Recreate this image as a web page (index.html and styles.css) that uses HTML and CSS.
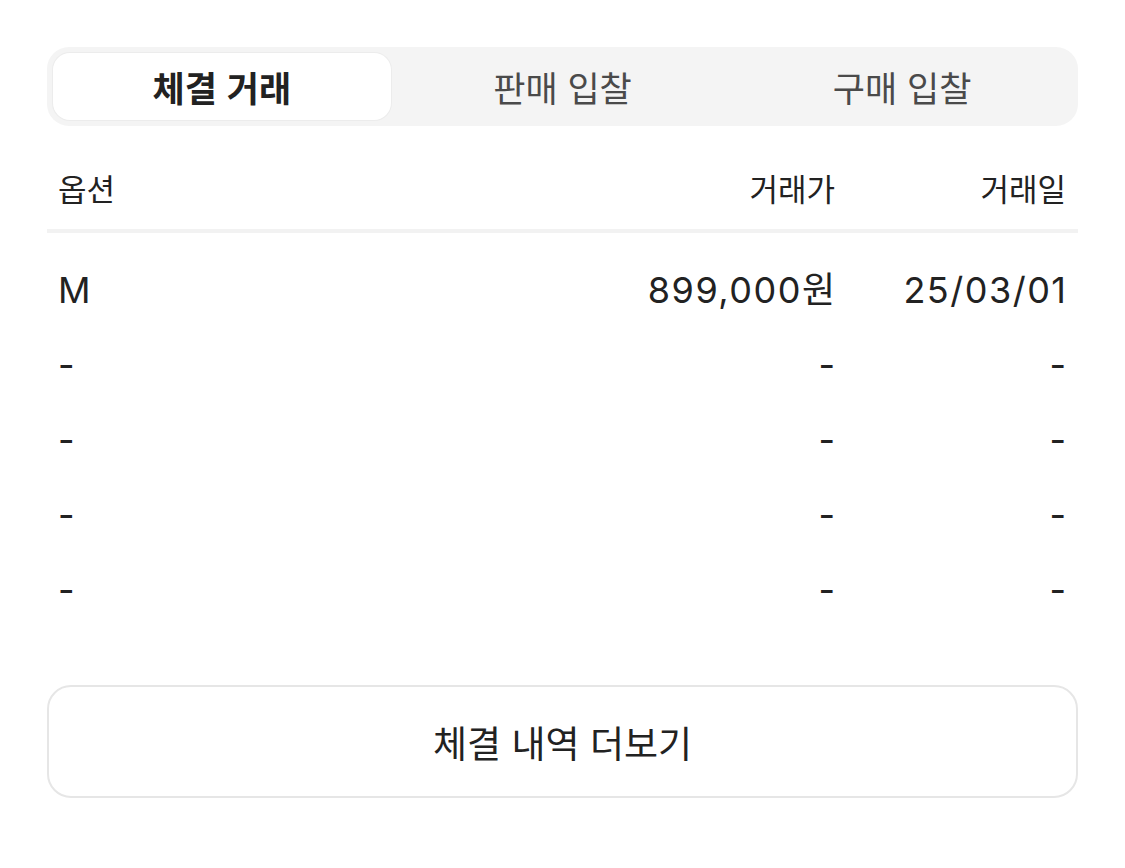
FILE: index.html
```html
<!DOCTYPE html>
<html lang="ko">
<head>
  <meta charset="UTF-8">
  <meta name="viewport" content="width=device-width, initial-scale=1.0">
  <title>체결 거래</title>
  <link rel="stylesheet" href="styles.css">
</head>
<body>
  <div class="tabs">
    <div class="tab ativo">체결 거래</div>
    <div class="tab">판매 입찰</div>
    <div class="tab">구매 입찰</div>
  </div>

  <div class="tabela">
    <div class="cabecalho">
      <span>옵션</span>
      <span>거래가</span>
      <span>거래일</span>
    </div>
    <div class="linhas">
      <div class="linha"><span>M</span><span>899,000원</span><span>25/03/01</span></div>
      <div class="linha"><span>-</span><span>-</span><span>-</span></div>
      <div class="linha"><span>-</span><span>-</span><span>-</span></div>
      <div class="linha"><span>-</span><span>-</span><span>-</span></div>
      <div class="linha"><span>-</span><span>-</span><span>-</span></div>
    </div>
  </div>

  <button class="mais">체결 내역 더보기</button>
</body>
</html>
```

FILE: styles.css
```css
body {
  margin: 0;
  padding: 47px 47px 0;
  background: #fff;
  color: #222;
  font-family: "Noto Sans CJK KR", "Noto Sans", sans-serif;
}

.tabs {
  display: grid;
  grid-template-columns: 1fr 1fr 1fr;
  background: #f4f4f4;
  border-radius: 22px;
  padding: 6px;
  height: 67px;
}

.tab {
  display: flex;
  justify-content: center;
  align-items: center;
  font-size: 35px;
  color: #4a4a4a;
  border-radius: 17px;
}

.tab.ativo {
  background: #fff;
  color: #222;
  font-weight: 700;
  margin-right: 2px;
  box-shadow: 0 0 0 1px #ececec;
}

.cabecalho,
.linha {
  display: grid;
  grid-template-columns: 1fr 230px 231px;
  padding: 0 12px 0 11px;
}

.cabecalho span:not(:first-child),
.linha span:not(:first-child) {
  text-align: right;
}

.cabecalho {
  margin-top: 32px;
  height: 60px;
  line-height: 60px;
  font-size: 31px;
  padding-bottom: 11px;
  border-bottom: 4px solid #f2f2f2;
}

.linhas {
  padding-top: 20px;
}

.linha {
  height: 75px;
  line-height: 75px;
  font-family: Inter, "Noto Sans CJK KR", sans-serif;
  font-size: 36px;
  letter-spacing: 1.5px;
}

.linha span:not(:first-child) {
  margin-right: -1.5px;
}

.mais {
  display: block;
  width: 100%;
  height: 113px;
  margin-top: 57px;
  background: #fff;
  border: 2px solid #e6e6e6;
  border-radius: 24px;
  color: #222;
  font-family: inherit;
  font-size: 37px;
}
```
